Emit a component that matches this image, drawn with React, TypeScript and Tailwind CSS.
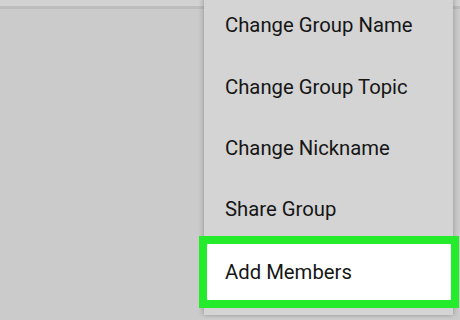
const items = ['Change Group Name', 'Change Group Topic', 'Change Nickname', 'Share Group'];

export default function App() {
  return (
    <div
      className="relative w-[460px] h-[320px] overflow-hidden bg-[#cbcbcb]"
      style={{ fontFamily: 'Roboto, "Noto Sans", sans-serif' }}
    >
      {/* top bar edge */}
      <div className="h-[9px] bg-[#d2d2d2] border-b-[3px] border-[#bdbdbd]" />

      {/* dropdown menu */}
      <div className="absolute left-[204px] top-[-5px] w-[249px] h-[320px] bg-[#d4d4d4] shadow-[-2px_0_4px_rgba(0,0,0,0.15),2px_0_4px_rgba(0,0,0,0.15)]">
        <div className="flex flex-col">
          {items.map((label) => (
            <div key={label} className="h-[61.3px] flex items-center pl-[21px] text-[20.3px] text-[#161616]">
              {label}
            </div>
          ))}
        </div>
      </div>

      {/* highlighted item */}
      <div className="absolute left-[199px] top-[236px] w-[260px] h-[72px] border-[8px] border-[#24ec2c] bg-white flex items-center pl-[18px] text-[20.3px] text-[#161616]">
        Add Members
      </div>
    </div>
  );
}
